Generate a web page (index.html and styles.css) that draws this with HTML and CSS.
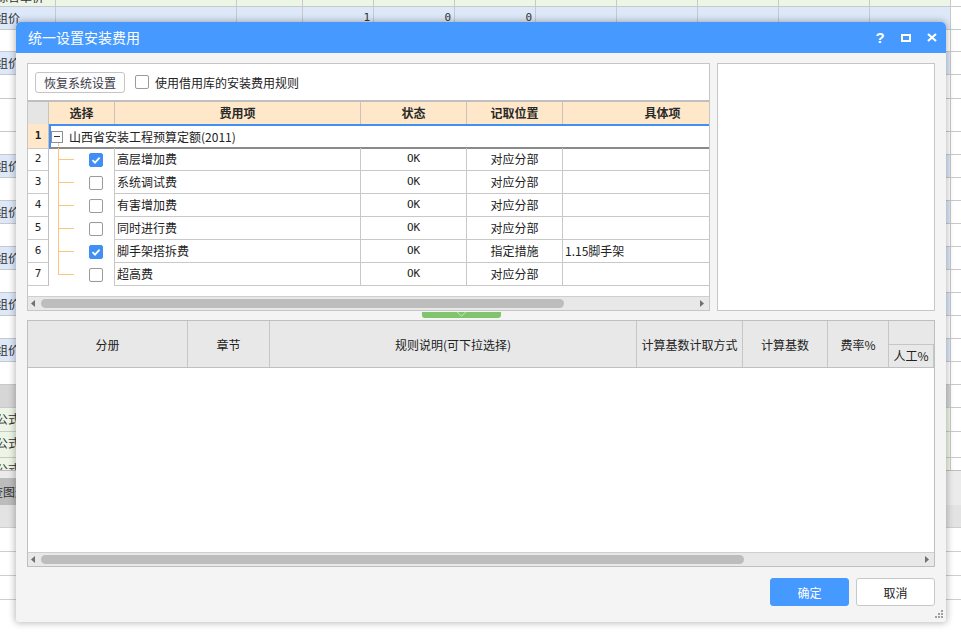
FILE: index.html
```html
<!DOCTYPE html>
<html lang="zh-CN">
<head>
<meta charset="utf-8">
<title>统一设置安装费用</title>
<link rel="stylesheet" href="styles.css">
</head>
<body>
<div class="bg">
  <div class="bg-grid">
    <div class="bg-rows">
      <div class="bg-row green h21"><div>综合单价</div><div></div><div></div><div></div><div></div><div></div><div></div><div></div><div></div><div></div><div></div><div></div></div>
      <div class="bg-row blue"><div>组价</div><div></div><div></div><div class="num">1</div><div class="num">0</div><div class="num">0</div><div></div><div></div><div></div><div></div><div></div><div></div></div>
      <div class="bg-row h22"><div></div><div></div><div></div><div></div><div></div><div></div><div></div><div></div><div></div><div></div><div></div><div></div></div>
      <div class="bg-row blue"><div>组价</div><div></div><div></div><div></div><div></div><div></div><div></div><div></div><div></div><div></div><div></div><div></div></div>
      <div class="bg-row h24"><div></div><div></div><div></div><div></div><div></div><div></div><div></div><div></div><div></div><div></div><div></div><div></div></div>
      <div class="bg-row h33"><div></div><div></div><div></div><div></div><div></div><div></div><div></div><div></div><div></div><div></div><div></div><div></div></div>
      <div class="bg-row"><div></div><div></div><div></div><div></div><div></div><div></div><div></div><div></div><div></div><div></div><div></div><div></div></div>
      <div class="bg-row blue"><div>组价</div><div></div><div></div><div></div><div></div><div></div><div></div><div></div><div></div><div></div><div></div><div></div></div>
      <div class="bg-row"><div></div><div></div><div></div><div></div><div></div><div></div><div></div><div></div><div></div><div></div><div></div><div></div></div>
      <div class="bg-row blue"><div>组价</div><div></div><div></div><div></div><div></div><div></div><div></div><div></div><div></div><div></div><div></div><div></div></div>
      <div class="bg-row"><div></div><div></div><div></div><div></div><div></div><div></div><div></div><div></div><div></div><div></div><div></div><div></div></div>
      <div class="bg-row blue"><div>组价</div><div></div><div></div><div></div><div></div><div></div><div></div><div></div><div></div><div></div><div></div><div></div></div>
      <div class="bg-row"><div></div><div></div><div></div><div></div><div></div><div></div><div></div><div></div><div></div><div></div><div></div><div></div></div>
      <div class="bg-row blue"><div>组价</div><div></div><div></div><div></div><div></div><div></div><div></div><div></div><div></div><div></div><div></div><div></div></div>
      <div class="bg-row"><div></div><div></div><div></div><div></div><div></div><div></div><div></div><div></div><div></div><div></div><div></div><div></div></div>
      <div class="bg-row blue"><div>组价</div><div></div><div></div><div></div><div></div><div></div><div></div><div></div><div></div><div></div><div></div><div></div></div>
      <div class="bg-row"><div></div><div></div><div></div><div></div><div></div><div></div><div></div><div></div><div></div><div></div><div></div><div></div></div>
      <div class="bg-row gray"><div></div><div></div><div></div><div></div><div></div><div></div><div></div><div></div><div></div><div></div><div></div><div></div></div>
      <div class="bg-row green h24"><div>公式</div><div></div><div></div><div></div><div></div><div></div><div></div><div></div><div></div><div></div><div></div><div></div></div>
      <div class="bg-row green h26"><div>公式</div><div></div><div></div><div></div><div></div><div></div><div></div><div></div><div></div><div></div><div></div><div></div></div>
      <div class="bg-row green"><div>公式</div><div></div><div></div><div></div><div></div><div></div><div></div><div></div><div></div><div></div><div></div><div></div></div>
    </div>
  </div>
  <div class="bg-bottom">
    <div class="bg-tabbar"><div class="bg-tab">查图形工程量</div></div>
    <div class="bg-sub"></div>
    <div class="bg-line"></div>
    <div class="bg-line"></div>
    <div class="bg-line"></div>
  </div>
</div>

<div class="dialog">
  <div class="titlebar">
    <span class="title">统一设置安装费用</span>
    <span class="tb-btn help">?</span>
    <span class="tb-btn"><svg width="10" height="8" viewBox="0 0 10 8"><rect x="1" y="1" width="8" height="6" fill="none" stroke="#fff" stroke-width="2"/></svg></span>
    <span class="tb-btn"><svg width="10" height="9" viewBox="0 0 10 9"><path d="M1 1 L9 8 M9 1 L1 8" stroke="#fff" stroke-width="2.2" fill="none"/></svg></span>
  </div>

  <div class="dlg-body">
    <div class="top-area">
      <div class="panel left-panel">
        <div class="toolbar">
          <button class="btn-restore">恢复系统设置</button>
          <span class="cb"></span>
          <span class="chk-text">使用借用库的安装费用规则</span>
        </div>
        <div class="grid-wrap">
          <div class="grid head">
            <div class="corner"></div>
            <div class="h">选择</div>
            <div class="h">费用项</div>
            <div class="h">状态</div>
            <div class="h">记取位置</div>
            <div class="h">具体项</div>
          </div>
          <div class="grid row1">
            <div class="rn sel">1</div>
            <div class="group"><span class="minus"></span><span class="group-text">山西省安装工程预算定额(2011)</span></div>
          </div>
          <div class="grid row">
            <div class="rn">2</div>
            <div class="pick"><span class="cb on"><svg width="12" height="12" viewBox="0 0 12 12"><path d="M2.5 6.2 L5 8.6 L9.6 3.6" stroke="#fff" stroke-width="1.8" fill="none"/></svg></span></div>
            <div class="name">高层增加费</div>
            <div class="ok">OK</div>
            <div class="pos">对应分部</div>
            <div class="spec"></div>
          </div>
          <div class="grid row">
            <div class="rn">3</div>
            <div class="pick"><span class="cb"></span></div>
            <div class="name">系统调试费</div>
            <div class="ok">OK</div>
            <div class="pos">对应分部</div>
            <div class="spec"></div>
          </div>
          <div class="grid row">
            <div class="rn">4</div>
            <div class="pick"><span class="cb"></span></div>
            <div class="name">有害增加费</div>
            <div class="ok">OK</div>
            <div class="pos">对应分部</div>
            <div class="spec"></div>
          </div>
          <div class="grid row">
            <div class="rn">5</div>
            <div class="pick"><span class="cb"></span></div>
            <div class="name">同时进行费</div>
            <div class="ok">OK</div>
            <div class="pos">对应分部</div>
            <div class="spec"></div>
          </div>
          <div class="grid row">
            <div class="rn">6</div>
            <div class="pick"><span class="cb on"><svg width="12" height="12" viewBox="0 0 12 12"><path d="M2.5 6.2 L5 8.6 L9.6 3.6" stroke="#fff" stroke-width="1.8" fill="none"/></svg></span></div>
            <div class="name">脚手架搭拆费</div>
            <div class="ok">OK</div>
            <div class="pos">指定措施</div>
            <div class="spec">1.15脚手架</div>
          </div>
          <div class="grid row">
            <div class="rn">7</div>
            <div class="pick last"><span class="cb"></span></div>
            <div class="name">超高费</div>
            <div class="ok">OK</div>
            <div class="pos">对应分部</div>
            <div class="spec"></div>
          </div>
        </div>
        <div class="grid-fill"></div>
        <div class="hscroll">
          <svg class="arr" width="4" height="7" viewBox="0 0 4 7"><path d="M4 0 L0 3.5 L4 7 Z" fill="#707070"/></svg>
          <span class="thumb top-thumb"></span>
          <svg class="arr arr-r" width="4" height="7" viewBox="0 0 4 7"><path d="M0 0 L4 3.5 L0 7 Z" fill="#707070"/></svg>
        </div>
      </div>
      <div class="panel right-panel"></div>
    </div>

    <div class="splitter">
      <svg class="grip" width="79" height="6" viewBox="0 0 79 6"><path d="M0 0 H79 V3 Q79 6 76 6 H3 Q0 6 0 3 Z" fill="#80c46d"/><path d="M35 0 L39.5 4 L44 0" stroke="#c4e8b9" stroke-width="1" fill="none"/></svg>
    </div>

    <div class="panel bottom-panel">
      <div class="bhead">
        <div class="bh span2">分册</div>
        <div class="bh span2">章节</div>
        <div class="bh span2">规则说明(可下拉选择)</div>
        <div class="bh span2">计算基数计取方式</div>
        <div class="bh span2">计算基数</div>
        <div class="bh span2">费率%</div>
        <div class="bh grp"></div>
        <div class="bh sub">人工%</div>
      </div>
      <div class="bbody"></div>
      <div class="hscroll">
        <svg class="arr" width="4" height="7" viewBox="0 0 4 7"><path d="M4 0 L0 3.5 L4 7 Z" fill="#707070"/></svg>
        <span class="thumb bottom-thumb"></span>
        <svg class="arr arr-r" width="4" height="7" viewBox="0 0 4 7"><path d="M0 0 L4 3.5 L0 7 Z" fill="#707070"/></svg>
      </div>
    </div>

    <div class="footer">
      <button class="btn primary">确定</button>
      <button class="btn">取消</button>
    </div>
  </div>
  <svg class="resize-grip" width="8" height="8" viewBox="0 0 8 8"><g fill="#a0a0a0"><rect x="6" y="0" width="2" height="2"/><rect x="3" y="3" width="2" height="2"/><rect x="6" y="3" width="2" height="2"/><rect x="0" y="6" width="2" height="2"/><rect x="3" y="6" width="2" height="2"/><rect x="6" y="6" width="2" height="2"/></g></svg>
</div>
</body>
</html>
```

FILE: styles.css
```css
* { box-sizing: border-box; }
html, body { margin: 0; padding: 0; }
body {
  width: 961px;
  height: 633px;
  overflow: hidden;
  position: relative;
  background: #fff;
  font-family: "Noto Sans CJK SC", "Liberation Sans", sans-serif;
  font-size: 12px;
  color: #333;
}

/* ---------- background sheet ---------- */
.bg { width: 961px; height: 633px; overflow: hidden; }
.bg-grid { height: 470px; overflow: hidden; }
.bg-rows { margin-top: -14px; }
.bg-row {
  display: grid;
  grid-template-columns: 56px 181px 66px 71px 81px 81px 81px 81px 81px 91px 81px 10px;
  height: 23px;
}
.bg-row > div {
  border-right: 1px solid #c9c9c9;
  border-bottom: 1px solid #c9c9c9;
  line-height: 21px;
  padding: 0 3px;
  white-space: nowrap;
  overflow: hidden;
}
.bg-row > div:first-child { padding-left: 0; text-indent: -4px; }
.bg-row > div:last-child { border-right: none; background: #fff; }
.bg-row > .num { text-align: right; font-family: "DejaVu Sans Mono", monospace; font-size: 11px; }
.bg-row.h21 { height: 21px; }
.bg-row.h22 { height: 22px; }
.bg-row.h24 { height: 24px; }
.bg-row.h26 { height: 26px; }
.bg-row.h33 { height: 33px; }
.bg-row.green { background: #edf6e6; }
.bg-row.blue { background: #dde8f9; }
.bg-row.gray { background: #d6d6d6; }

.bg-bottom { border-top: 1px solid #bdbdbd; }
.bg-tabbar { height: 34px; background: #ebebeb; display: flex; align-items: flex-end; }
.bg-tab {
  height: 27px; width: 70px; background: #bcbcbc;
  line-height: 27px; text-indent: -9px; white-space: nowrap; overflow: hidden;
}
.bg-sub { height: 23px; background: #e3e3e3; border-bottom: 1px solid #cfcfcf; }
.bg-line { height: 24px; border-bottom: 1px solid #cfcfcf; }

/* ---------- dialog ---------- */
.dialog {
  position: absolute;
  left: 16px;
  top: 22px;
  width: 930px;
  height: 600px;
  background: #f4f4f4;
  border-radius: 5px 5px 3px 3px;
  box-shadow: 0 0 7px 1px rgba(0, 0, 0, 0.28);
  display: flex;
  flex-direction: column;
}
.titlebar {
  height: 31px;
  flex: none;
  background: #4599ff;
  border-radius: 5px 5px 0 0;
  display: flex;
  align-items: center;
  padding: 0 1px 0 12px;
  color: #fff;
}
.title { flex: 1; font-size: 14px; line-height: 31px; }
.tb-btn {
  width: 26px; height: 31px;
  display: flex; align-items: center; justify-content: center;
}
.tb-btn.help {
  font-family: "Liberation Sans", sans-serif;
  font-weight: bold;
  font-size: 15px;
}

.dlg-body {
  flex: 1;
  padding: 10px 11px 0 11px;
  display: flex;
  flex-direction: column;
}
.top-area { display: flex; gap: 7px; height: 248px; flex: none; }
.panel { background: #fff; border: 1px solid #c6c6c6; }
.left-panel { width: 683px; display: flex; flex-direction: column; overflow: hidden; }
.right-panel { flex: 1; }

.toolbar {
  height: 38px;
  flex: none;
  border-bottom: 2px solid #bfbfbf;
  display: flex;
  align-items: center;
  padding-left: 7px;
}
.btn-restore {
  width: 90px; height: 21px; padding: 0;
  font-family: inherit; font-size: 12px; color: #3a3a48;
  background: #fdfdfd; border: 1px solid #c4c4c4; border-radius: 3px;
}
.toolbar .cb { margin-left: 10px; }
.chk-text { margin-left: 6px; color: #222; }

.cb {
  width: 14px; height: 14px;
  border: 1px solid #9b9b9b; border-radius: 2px; background: #fff;
  display: inline-flex; align-items: center; justify-content: center;
  flex: none;
}
.cb.on { background: #3f8ff5; border-color: #3f8ff5; }

.grid-wrap { overflow: hidden; flex: none; }
.grid {
  display: grid;
  grid-template-columns: 21px 66px 246px 106px 96px 200px;
  width: 735px;
}
.head { height: 22px; }
.head > div {
  background: #ffe8c9;
  border-right: 1px solid #cdc3b4;
  font-weight: bold;
  line-height: 22px;
  text-align: center;
  color: #2a2a2a;
}
.head > .corner { background: #e5e5e5; border-right: 1px solid #c4c4c4; }

.row1 { height: 24px; }
.rn {
  border-right: 1px solid #c0c0c0;
  border-bottom: 1px solid #cacaca;
  text-align: center;
  font-family: "DejaVu Sans Mono", monospace;
  font-size: 11px;
  line-height: 22px;
  color: #222;
}
.rn.sel { background: #ffe8c9; font-weight: bold; line-height: 24px; }
.group {
  grid-column: 2 / -1;
  border-top: 2px solid #3f8ff5;
  border-left: 2px solid #3f8ff5;
  border-bottom: 2px solid #8a8a8a;
  display: flex;
  align-items: center;
  background: linear-gradient(#fcc77c, #fcc77c) 7px 16px / 1px 4px no-repeat;
}
.minus {
  width: 12px; height: 12px;
  border: 1px solid #8f8f8f; background: #fff;
  display: inline-flex; align-items: center; justify-content: center;
}
.minus::before { content: ""; width: 6px; height: 1px; background: #333; }
.group-text { margin-left: 6px; color: #222; }

.row { height: 23px; }
.row > div { line-height: 22px; white-space: nowrap; overflow: hidden; }
.pick {
  border-right: 1px solid #c8c8c8;
  display: flex; align-items: center;
  padding-left: 40px;
  background:
    linear-gradient(#fcc77c, #fcc77c) 9px 0 / 1px 100% no-repeat,
    linear-gradient(#fcc77c, #fcc77c) 9px 11px / 16px 1px no-repeat;
}
.pick.last {
  background:
    linear-gradient(#fcc77c, #fcc77c) 9px 0 / 1px 12px no-repeat,
    linear-gradient(#fcc77c, #fcc77c) 9px 11px / 16px 1px no-repeat;
}
.name, .ok, .pos, .spec {
  border-right: 1px solid #c8c8c8;
  border-bottom: 1px solid #c8c8c8;
  color: #222;
}
.name { padding-left: 2px; }
.ok { text-align: center; font-family: "DejaVu Sans Mono", monospace; font-size: 11px; }
.pos { text-align: center; }
.spec { padding-left: 2px; }

.grid-fill { flex: 1; }
.hscroll {
  height: 14px;
  flex: none;
  background: #e8e8e8;
  border-top: 1px solid #cfcfcf;
  display: flex;
  align-items: center;
  padding-left: 3px;
  padding-right: 5px;
}
.thumb { height: 9px; border-radius: 5px; background: #bdbdbd; margin-left: 6px; }
.top-thumb { width: 523px; }
.bottom-thumb { width: 703px; }
.arr-r { margin-left: auto; }

.splitter { height: 9px; flex: none; padding: 1px 0 0 395px; }
.grip { display: block; }

.bottom-panel {
  height: 247px;
  flex: none;
  border-color: #bfbfbf;
  display: flex;
  flex-direction: column;
}
.bhead {
  display: grid;
  grid-template-columns: 160px 82px 367px 106px 85px 61px 45px;
  grid-template-rows: 23px 23px;
  height: 47px;
  background: #e8e8e8;
  border-bottom: 1px solid #c0c0c0;
  flex: none;
}
.bh { color: #222; text-align: center; white-space: nowrap; }
.bh.span2 {
  grid-row: 1 / 3;
  border-right: 1px solid #c6c6c6;
  display: flex; align-items: center; justify-content: center;
}
.bh.grp { grid-column: 7; grid-row: 1; }
.bh.sub {
  grid-column: 7; grid-row: 2;
  border-top: 1px solid #c6c6c6;
  border-right: 1px solid #c6c6c6;
  line-height: 22px;
}
.bbody { flex: 1; background: #fff; }
.bottom-panel .hscroll { padding-left: 3px; padding-right: 5px; }

.footer {
  flex: 1;
  display: flex;
  justify-content: flex-end;
  align-items: flex-start;
  gap: 7px;
  padding-top: 11px;
}
.btn {
  width: 79px; height: 28px; padding: 0;
  font-family: inherit; font-size: 12px; color: #222;
  background: #fff; border: 1px solid #c8c8c8; border-radius: 3px;
}
.btn.primary { background: #4599ff; border-color: #4599ff; color: #fff; }

.resize-grip { position: absolute; right: 3px; bottom: 4px; }
```
